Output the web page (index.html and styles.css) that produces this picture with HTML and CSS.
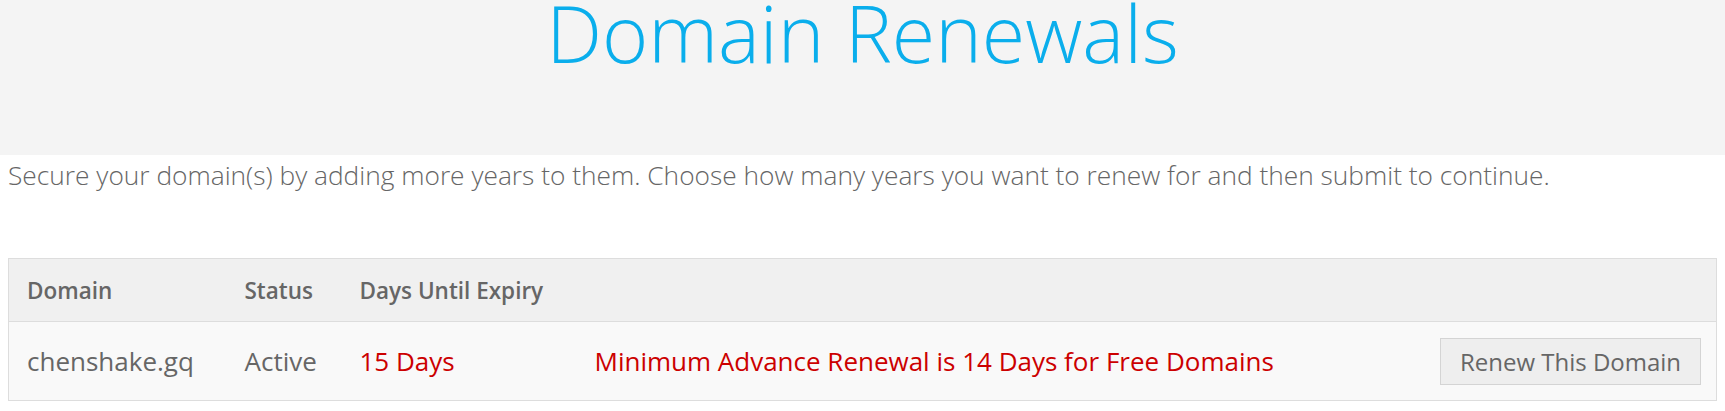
FILE: index.html
```html
<!DOCTYPE html>
<html>
<head>
<meta charset="utf-8">
<link rel="stylesheet" href="styles.css">
</head>
<body>
<header class="banner">
  <h1 class="title">Domain Renewals</h1>
</header>
<main class="content">
  <p class="intro">Secure your domain(s) by adding more years to them. Choose how many years you want to renew for and then submit to continue.</p>
  <table class="domains">
    <colgroup>
      <col class="w-domain">
      <col class="w-status">
      <col class="w-days">
      <col>
      <col class="w-action">
    </colgroup>
    <thead>
      <tr>
        <th>Domain</th>
        <th>Status</th>
        <th>Days Until Expiry</th>
        <th></th>
        <th></th>
      </tr>
    </thead>
    <tbody>
      <tr>
        <td>chenshake.gq</td>
        <td>Active</td>
        <td class="warn">15 Days</td>
        <td class="warn">Minimum Advance Renewal is 14 Days for Free Domains</td>
        <td class="c-action"><button class="btn">Renew This Domain</button></td>
      </tr>
    </tbody>
  </table>
</main>
</body>
</html>
```

FILE: styles.css
```css
html, body {
  margin: 0;
  padding: 0;
  background: #ffffff;
  font-family: "Open Sans", "Noto Sans", sans-serif;
  color: #666666;
}
.banner {
  background: #f4f4f4;
  height: 155px;
  text-align: center;
  overflow: hidden;
}
.title {
  margin: 0;
  padding-top: 2px;
  font-weight: 300;
  font-size: 79px;
  line-height: 62px;
  color: #0aaeec;
}
.content {
  padding: 0 8px;
}
.intro {
  margin: 0;
  padding-top: 2px;
  font-weight: 300;
  font-size: 26.3px;
  line-height: 36px;
  color: #666666;
}
.domains {
  margin-top: 65px;
  width: 100%;
  table-layout: fixed;
  border-collapse: collapse;
  border: 1px solid #dddddd;
  font-size: 26px;
}
.w-domain { width: 218px; }
.w-status { width: 115px; }
.w-days { width: 235px; }
.w-action { width: 320px; }
.domains thead tr {
  background: #f0f0f0;
  height: 63px;
}
.domains tbody tr {
  background: #f9f9f9;
  height: 79px;
}
.domains th {
  text-align: left;
  font-weight: 600;
  font-size: 22.5px;
  color: #666666;
  padding: 0 0 0 18px;
  border-bottom: 1px solid #dddddd;
  white-space: nowrap;
}
.domains td {
  padding: 0 0 0 18px;
  color: #666666;
  white-space: nowrap;
}
.domains .warn {
  color: #cc0000;
}
.domains td.c-action {
  text-align: right;
  padding-right: 15px;
}
.btn {
  font-family: "Open Sans", "Noto Sans", sans-serif;
  font-size: 24px;
  color: #666666;
  background: #eeeeee;
  border: 1px solid #d4d4d4;
  border-radius: 0;
  height: 47px;
  width: 261px;
  padding: 0;
  vertical-align: middle;
}
```
